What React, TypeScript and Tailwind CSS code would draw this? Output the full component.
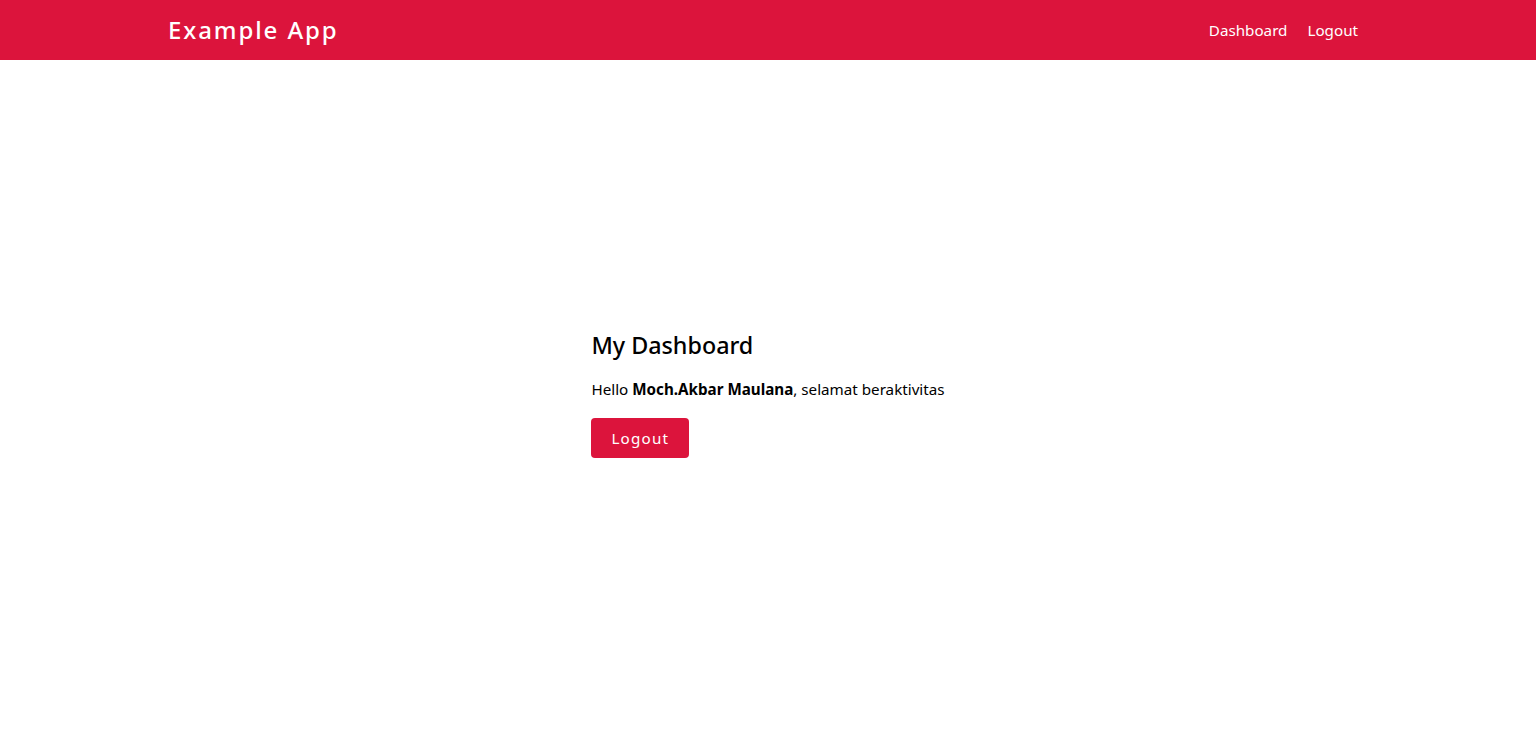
export default function App() {
  return (
    <div className="min-h-screen bg-white text-black" style={{ fontFamily: '"Noto Sans", "Open Sans", sans-serif' }}>
      <nav className="h-[60px] bg-[#dc143c] text-white">
        <div className="mx-auto flex h-full max-w-[1200px] items-center justify-between">
          <a href="#" className="text-[24px] font-medium tracking-[1.9px]">
            Example App
          </a>
          <div className="flex items-center gap-5 pr-[10px] text-[15.2px]">
            <a href="#">Dashboard</a>
            <a href="#">Logout</a>
          </div>
        </div>
      </nav>

      <main className="flex justify-center pt-[268px]">
        <div>
          <h1 className="text-[23.3px] font-medium leading-[34px]">My Dashboard</h1>
          <p className="mt-[15px] text-[15.2px] leading-6">
            Hello <b className="font-bold">Moch.Akbar Maulana</b>, selamat beraktivitas
          </p>
          <button className="mt-[17px] h-10 rounded-[4px] bg-[#dc143c] px-5 text-[15.2px] tracking-[1.2px] text-white">
            Logout
          </button>
        </div>
      </main>
    </div>
  );
}
